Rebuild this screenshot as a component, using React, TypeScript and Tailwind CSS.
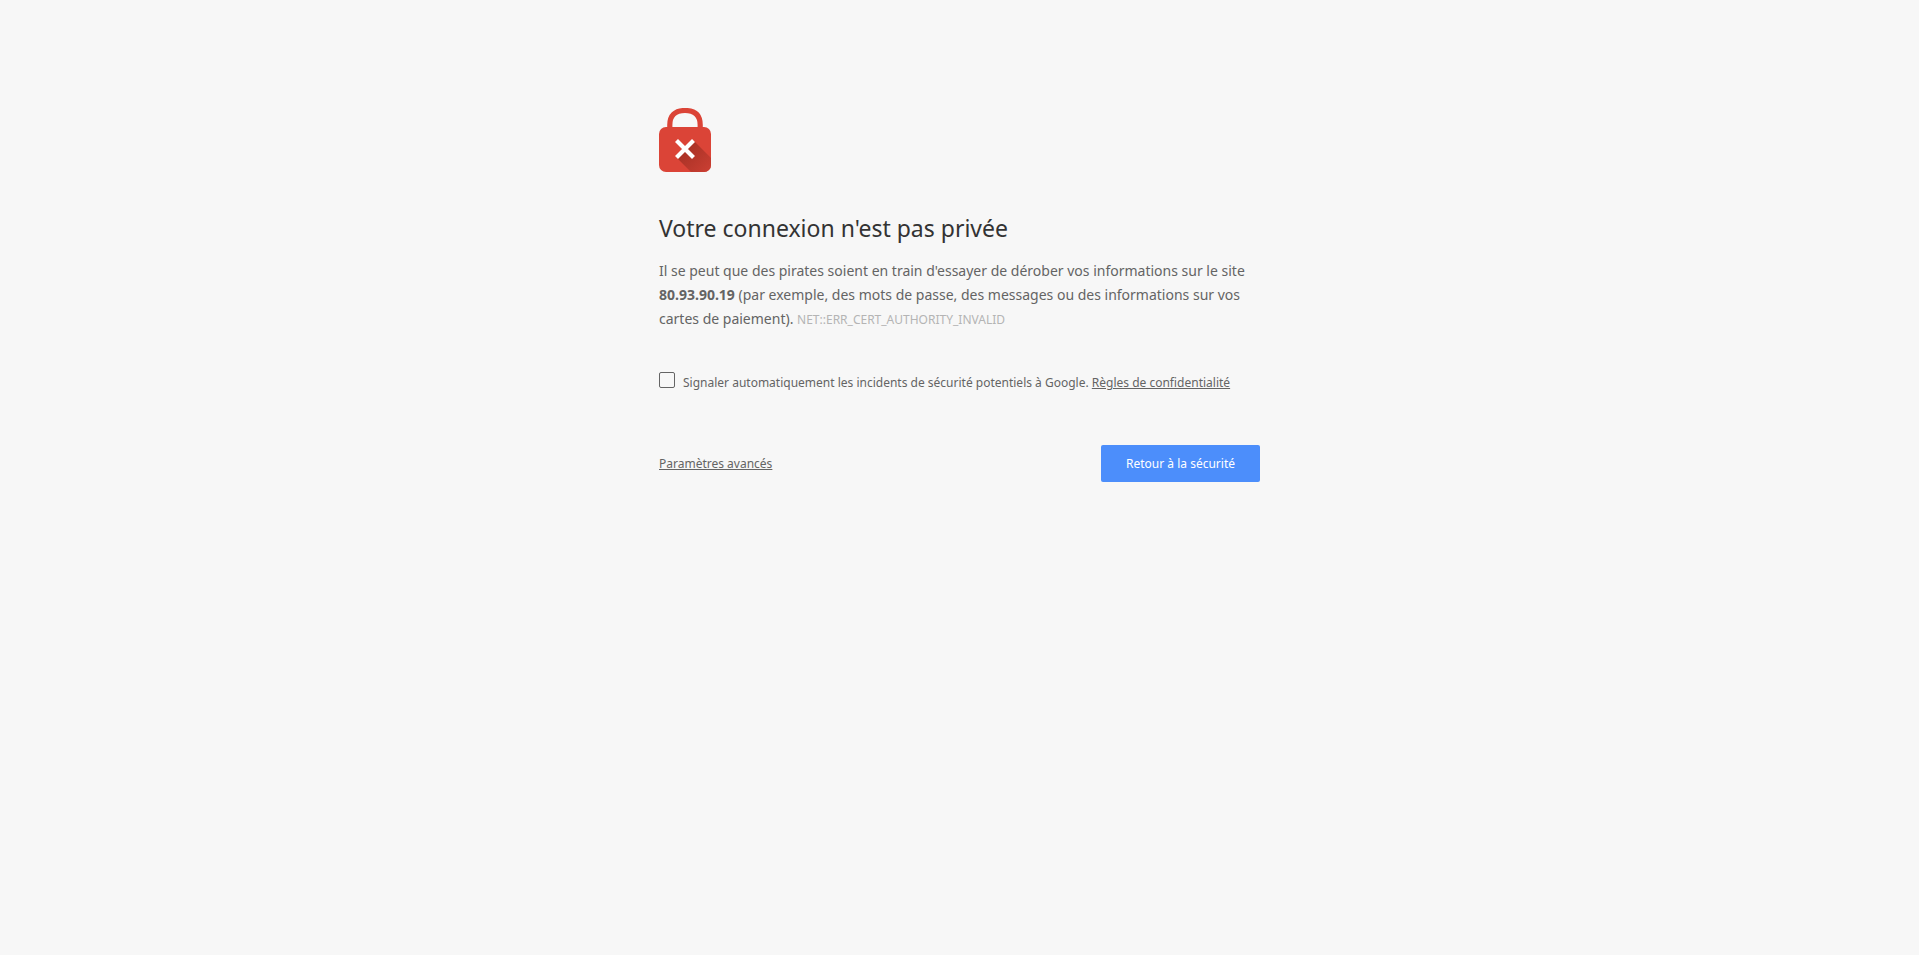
function LockIcon() {
  return (
    <svg width="52" height="64" viewBox="0 0 52 64" aria-hidden="true">
      <defs>
        <linearGradient id="shade" x1="26" y1="41" x2="50" y2="65" gradientUnits="userSpaceOnUse">
          <stop offset="0" stopColor="#a93226" />
          <stop offset="1" stopColor="#cb3f33" />
        </linearGradient>
        <clipPath id="body">
          <rect y="19" width="52" height="45" rx="7" />
        </clipPath>
      </defs>
      <path
        d="M10.800 22V17C10.800 7.500 16 2.500 26 2.500S41.200 7.500 41.200 17V22"
        fill="none"
        stroke="#db4437"
        strokeWidth="5.200"
      />
      <rect y="19" width="52" height="45" rx="7" fill="#db4437" />
      <path d="M35 33L61 59V70H38L17.500 49.500L26 41Z" fill="url(#shade)" clipPath="url(#body)" />
      <path d="M17.500 32.500L34.500 49.500M34.500 32.500L17.500 49.500" stroke="#fff" strokeWidth="4.200" />
    </svg>
  )
}

export default function App() {
  return (
    <div className="min-h-screen bg-[#f7f7f7] px-4 font-['Noto_Sans',sans-serif] text-[#646464]">
      <main className="mx-auto max-w-[601px] pt-[108px]">
        <LockIcon />

        <h1 className="mt-10 text-[23px] leading-8 text-[#333]">Votre connexion n'est pas privée</h1>

        <p className="mt-[15px] text-sm leading-6">
          Il se peut que des pirates soient en train d'essayer de dérober vos informations sur le site{' '}
          <strong>80.93.90.19</strong> (par exemple, des mots de passe, des messages ou des informations sur vos
          cartes de paiement). <span className="text-xs text-[#b4b4b4]">NET::ERR_CERT_AUTHORITY_INVALID</span>
        </p>

        {/* Reporting opt-in */}
        <div className="mt-[41px] flex items-start gap-2 text-xs leading-[22px]">
          <input
            id="report"
            type="checkbox"
            className="size-4 shrink-0 appearance-none rounded-xs border border-[#646464] checked:bg-[#646464]"
          />
          <p>
            <label htmlFor="report">
              Signaler automatiquement les incidents de sécurité potentiels à Google.
            </label>{' '}
            <a href="#privacy" className="underline">Règles de confidentialité</a>
          </p>
        </div>

        {/* Actions */}
        <div className="mt-[51px] flex items-center justify-between text-xs leading-[22px]">
          <a href="#details" className="underline">Paramètres avancés</a>
          <button type="button" className="h-[37px] rounded-xs bg-[#4c8efb] px-[25px] text-white">
            Retour à la sécurité
          </button>
        </div>
      </main>
    </div>
  )
}
